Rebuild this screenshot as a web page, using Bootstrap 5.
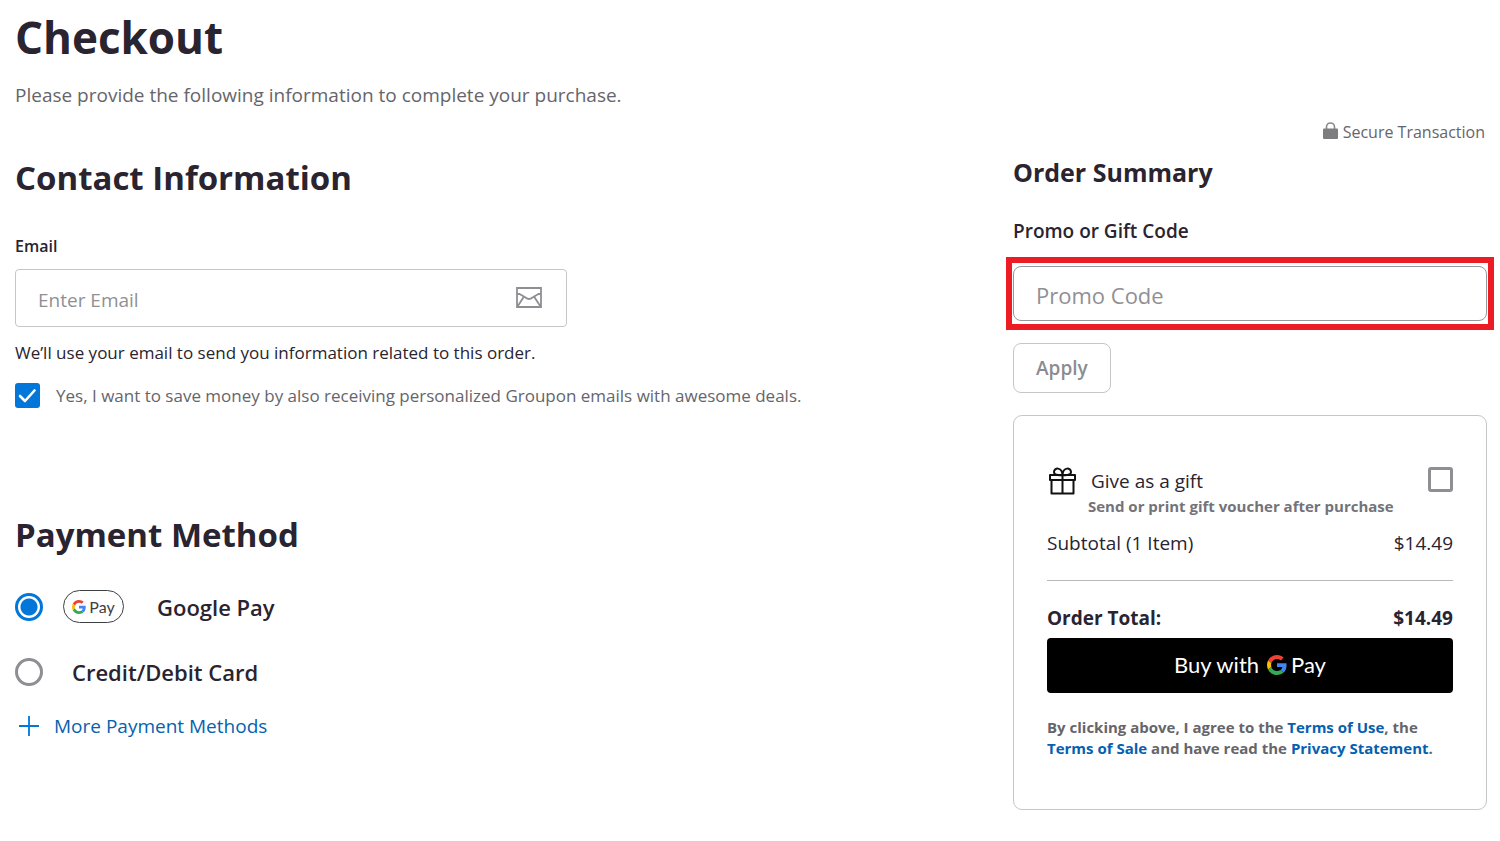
<!DOCTYPE html>
<html lang="en">
<head>
<meta charset="utf-8">
<meta name="viewport" content="width=device-width, initial-scale=1">
<title>Checkout</title>
<link href="https://cdn.jsdelivr.net/npm/bootstrap@5.3.0/dist/css/bootstrap.min.css" rel="stylesheet">
<style>
  :root { --ink: #2a2330; --soft: #65656b; --line: #c6c6c8; --blue: #0277d9; --link: #0561b0; }
  body { font-family: "Open Sans", sans-serif; font-size: 16px; line-height: 24px; color: var(--ink); background: #fff; }
  a { color: var(--link); text-decoration: none; }
  a:hover { text-decoration: underline; }
  .soft { color: var(--soft); }
  .main-pane { padding: 9px 15px 24px; }
  .side-pane { padding: 120px 13px 24px; }
  .page-title { font-size: 44px; line-height: 56px; font-weight: 700; margin: 0 0 16px; }
  .intro { margin-bottom: 47px; }
  .section-title { font-size: 33px; line-height: 44px; font-weight: 700; margin: 0; }
  .side-title { font-size: 25px; line-height: 34px; font-weight: 700; margin: 11px 0 28px; }
  .text-base { font-size: 17px; }
  .text-md { font-size: 19px; line-height: 28px; }
  .text-note { font-size: 15px; line-height: 21px; font-weight: 700; }
  .text-option { font-size: 22px; line-height: 32px; font-weight: 600; }

  .email-label { margin: 34px 0 11px; font-size: 16px; font-weight: 600; }
  .email-group { max-width: 552px; height: 58px; border: 1px solid var(--line); border-radius: 4px; padding: 0 24px 0 22px; }
  .email-group .form-control { border: 0; padding: 4px 0 0; font-size: 19px; color: var(--ink); box-shadow: none; }
  .form-control::placeholder { color: #909094; }
  .email-hint { margin: 14px 0 18px; }

  .form-check-input { margin: 0; flex: none; border: 3px solid #8f8f93; box-shadow: none; }
  .tick { width: 25px; height: 25px; }
  .form-check-input[type=checkbox].tick { border-radius: 3px; }
  .form-check-input.tick:checked { background-color: var(--blue); border: 0; background-size: 25px 25px; background-image: url("data:image/svg+xml,%3csvg xmlns='http://www.w3.org/2000/svg' viewBox='0 0 25 25'%3e%3cpath fill='none' stroke='%23fff' stroke-width='2.6' stroke-linecap='round' stroke-linejoin='round' d='M5 13l5 5L19.500 7.500'/%3e%3c/svg%3e"); }
  .dial { width: 28px; height: 28px; }
  .form-check-input.dial:checked { border-color: var(--blue); background: radial-gradient(circle, var(--blue) 8px, #fff 9px); }

  .payment { margin-top: 105px; }
  .pay-row { margin-top: 33px; }
  .gpay-label { margin-left: 20px; gap: 33px; }
  .card-label { margin-left: 29px; }
  .more-link { margin: 24px 0 0 4px; gap: 15px; }
  .pay-word { font-family: Lato, sans-serif; }
  .gpay-pill { width: 61px; height: 33px; border: 1px solid #3c4043; border-radius: 17px; font-size: 16px; color: #3c4043; gap: 3px; }

  .secure { gap: 5px; padding-right: 2px; }
  .promo-frame { margin: 12px -7px 13px; border: 6px solid #ed1c24; padding: 3px 1px; }
  .promo-frame .form-control { height: 55px; border: 1px solid #98989c; border-radius: 8px; padding: 2px 22px 0; font-size: 22px; }
  .btn-apply, .btn-apply:disabled { height: 50px; padding: 0 22px; border: 1px solid var(--line); border-radius: 8px; font-size: 19px; font-weight: 600; color: #8c8c90; opacity: 1; }
  .order-box { margin-top: 22px; border: 1px solid var(--line); border-radius: 9px; padding: 51px 33px 50px; }
  .order-box hr { margin: 23px 0; color: #b9b9bd; opacity: 1; }
  .gift-label { margin-left: 11px; }
  .gift-label .text-md { padding-left: 3px; }
  .gift-note { color: #737379; padding-top: 1px; }
  .subtotal { margin-top: 12px; }
  .btn-gpay { height: 55px; margin: 6px 0 24px; padding: 4px 12px 6px; border-radius: 4px; background: #000; color: #fff; font-size: 22px; }
  .btn-gpay:hover { background: #222; color: #fff; }
</style>
</head>
<body>
<svg width="0" height="0" class="position-absolute" aria-hidden="true">
  <defs>
    <g id="g-mark">
      <path fill="#ea4335" d="M24 9.500c3.540 0 6.710 1.220 9.210 3.600l6.850-6.850C35.900 2.380 30.470 0 24 0 14.620 0 6.510 5.380 2.560 13.220l7.980 6.190C12.430 13.720 17.740 9.500 24 9.500z"/>
      <path fill="#4285f4" d="M46.980 24.550c0-1.570-.15-3.090-.38-4.550H24v9.020h12.940c-.58 2.960-2.260 5.480-4.780 7.180l7.730 6c4.510-4.180 7.090-10.360 7.090-17.650z"/>
      <path fill="#fbbc05" d="M10.530 28.590c-.48-1.450-.76-2.990-.76-4.590s.27-3.140.76-4.590l-7.980-6.190C.92 16.460 0 20.120 0 24c0 3.880.92 7.540 2.560 10.780l7.970-6.190z"/>
      <path fill="#34a853" d="M24 48c6.480 0 11.930-2.130 15.890-5.810l-7.730-6c-2.150 1.450-4.920 2.300-8.160 2.300-6.260 0-11.570-4.220-13.470-9.910l-7.980 6.190C6.510 42.620 14.620 48 24 48z"/>
    </g>
  </defs>
</svg>

<div class="container-fluid px-0">
  <div class="row g-0">
    <main class="col-8 main-pane">
      <h1 class="page-title">Checkout</h1>
      <p class="text-md soft intro">Please provide the following information to complete your purchase.</p>

      <section>
        <h2 class="section-title">Contact Information</h2>
        <label for="email" class="d-block email-label">Email</label>
        <div class="email-group d-flex align-items-center">
          <input type="email" class="form-control" id="email" placeholder="Enter Email">
          <svg width="26" height="22" viewBox="0 0 26 22" fill="none" stroke="#8f8f93" stroke-width="1.8" class="flex-shrink-0" aria-hidden="true">
            <path d="M1 1h24v19H1zM1 5.500l8.500 5Q13 13.500 16.500 10.500L25 5.500M1.500 19.500 8 9.500M24.500 19.500 18 9.500"/>
          </svg>
        </div>
        <p class="text-base email-hint">We’ll use your email to send you information related to this order.</p>
        <div class="d-flex align-items-center gap-3">
          <input class="form-check-input tick" type="checkbox" id="deals" checked>
          <label for="deals" class="text-base soft">Yes, I want to save money by also receiving personalized Groupon emails with awesome deals.</label>
        </div>
      </section>

      <section class="payment">
        <h2 class="section-title">Payment Method</h2>
        <div class="d-flex align-items-center pay-row">
          <input class="form-check-input dial" type="radio" name="method" id="gpay" checked>
          <label for="gpay" class="d-flex align-items-center text-option gpay-label">
            <span class="gpay-pill pay-word fw-normal d-flex align-items-center justify-content-center">
              <svg width="14" height="14" viewBox="0 0 48 48" aria-hidden="true"><use href="#g-mark"/></svg>Pay
            </span>
            Google Pay
          </label>
        </div>
        <div class="d-flex align-items-center pay-row">
          <input class="form-check-input dial" type="radio" name="method" id="card">
          <label for="card" class="text-option card-label">Credit/Debit Card</label>
        </div>
        <a href="#" class="more-link text-md d-inline-flex align-items-center">
          <svg width="20" height="20" viewBox="0 0 20 20" stroke="#0277d9" stroke-width="1.800" aria-hidden="true"><path d="M10 0v20M0 10h20"/></svg>
          More Payment Methods
        </a>
      </section>
    </main>

    <aside class="col-4 side-pane">
      <div class="d-flex justify-content-end align-items-center secure soft">
        <svg width="15" height="20" viewBox="0 0 15 20" aria-hidden="true"><path d="M3.500 8V5a4 4 0 0 1 8 0v3" fill="none" stroke="#8a8a8c" stroke-width="1.600"/><rect y="6.500" width="15" height="10.500" rx="1" fill="#7d7d7f"/></svg>
        <span>Secure Transaction</span>
      </div>
      <h2 class="side-title">Order Summary</h2>
      <label for="promo" class="text-md fw-semibold d-block">Promo or Gift Code</label>
      <div class="promo-frame">
        <input type="text" class="form-control" id="promo" placeholder="Promo Code">
      </div>
      <button type="button" class="btn btn-apply" disabled>Apply</button>

      <div class="order-box">
        <div class="d-flex align-items-start">
          <svg width="30" height="30" viewBox="0 0 30 30" fill="none" stroke="#111" stroke-width="2" stroke-linejoin="round" class="flex-shrink-0" aria-hidden="true">
            <path d="M3 8h25v5H3zM4.500 13v13.500h22V13M15.500 8v18M15.500 8C11 8.500 7 8 7 5c0-4.500 8-5.500 8.500 3M15.500 8C20 8.500 24 8 24 5c0-4.500-8-5.500-8.500 3"/>
          </svg>
          <label for="gift" class="flex-grow-1 gift-label">
            <span class="text-md d-block">Give as a gift</span>
            <span class="text-note gift-note d-block">Send or print gift voucher after purchase</span>
          </label>
          <input class="form-check-input tick" type="checkbox" id="gift">
        </div>
        <div class="d-flex justify-content-between text-md subtotal"><span>Subtotal (1 Item)</span><span>$14.49</span></div>
        <hr>
        <div class="d-flex justify-content-between text-md fw-bold"><span>Order Total:</span><span>$14.49</span></div>
        <button type="button" class="btn btn-gpay pay-word w-100 d-flex align-items-center justify-content-center gap-2">
          Buy with
          <span class="d-flex align-items-center gap-1"><svg width="20" height="20" viewBox="0 0 48 48" aria-hidden="true"><use href="#g-mark"/></svg>Pay</span>
        </button>
        <p class="text-note soft mb-0">By clicking above, I agree to the <a href="#">Terms of Use</a>, the <a href="#">Terms of Sale</a> and have read the <a href="#">Privacy Statement</a>.</p>
      </div>
    </aside>
  </div>
</div>
<script src="https://cdn.jsdelivr.net/npm/bootstrap@5.3.0/dist/js/bootstrap.bundle.min.js"></script>
</body>
</html>
